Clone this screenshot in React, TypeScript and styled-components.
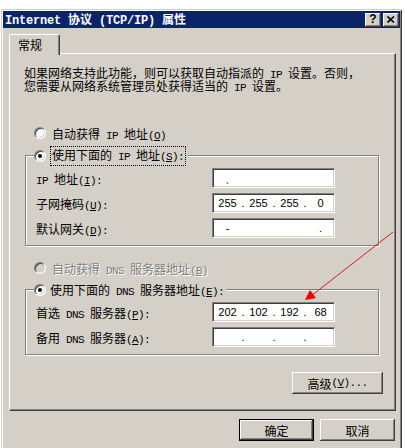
import styled, { createGlobalStyle } from "styled-components";

const face = "#d4d0c8";
const shadow = "#808080";
const dark = "#404040";

const GlobalStyle = createGlobalStyle`
  html, body {
    margin: 0;
    padding: 0;
    background: #fff;
    overflow: hidden;
  }
  body {
    font-family: "Noto Sans CJK SC", "Liberation Sans", sans-serif;
    font-size: 12px;
    color: #000;
  }
`;

const Screen = styled.div`
  position: relative;
  width: 405px;
  height: 448px;
  padding-top: 9px;
  box-sizing: border-box;
  overflow: hidden;
`;

const Window = styled.div`
  margin-left: 1px;
  width: 401px;
  height: 460px;
  box-sizing: border-box;
  padding: 2px;
  background: ${face};
  box-shadow: inset 1px 1px ${face}, inset -1px -1px ${dark},
    inset 2px 2px #fff, inset -2px -2px ${shadow};
`;

const TitleBar = styled.div`
  height: 17px;
  padding: 0 1px 0 2px;
  display: flex;
  align-items: center;
  justify-content: space-between;
  background: #0a246a;
  color: #fff;
  font-weight: bold;
  line-height: 17px;
`;

const TitleButtons = styled.div`
  display: flex;
  gap: 2px;
`;

const TitleButton = styled.div`
  width: 16px;
  height: 14px;
  box-sizing: border-box;
  display: flex;
  align-items: center;
  justify-content: center;
  background: ${face};
  color: #000;
  font-family: "Liberation Sans", sans-serif;
  font-size: 12px;
  font-weight: bold;
  box-shadow: inset -1px -1px ${dark}, inset 1px 1px #fff,
    inset -2px -2px ${shadow}, inset 2px 2px ${face};
`;

const Body = styled.div`
  padding: 6px 5px 0 6px;
`;

const TabRow = styled.div`
  display: flex;
  height: 19px;
`;

const Tab = styled.div`
  position: relative;
  z-index: 1;
  width: 51px;
  height: 21px;
  box-sizing: border-box;
  padding-left: 8px;
  line-height: 19px;
  background: ${face};
  border-left: 1px solid #fff;
  border-top: 1px solid #fff;
  border-right: 1px solid ${dark};
  border-top-right-radius: 2px;
  border-top-left-radius: 2px;
  box-shadow: inset -1px 0 ${shadow};
`;

const Panel = styled.div`
  width: 387px;
  height: 358px;
  box-sizing: border-box;
  padding: 12px 13px 0 14px;
  border: 1px solid;
  border-color: #fff ${dark} ${dark} #fff;
  box-shadow: inset -1px -1px ${shadow};
  display: flex;
  flex-direction: column;
`;

const Intro = styled.div`
  display: flex;
  flex-direction: column;
`;

const IntroLine = styled.div`
  height: 13px;
  line-height: 13px;
  white-space: nowrap;
`;

const RadioRow = styled.div<{ $top: number; $disabled?: boolean }>`
  margin-top: ${(p) => p.$top}px;
  padding-left: 10px;
  height: 16px;
  display: flex;
  align-items: center;
  gap: 6px;
  color: ${(p) => (p.$disabled ? shadow : "#000")};
  text-shadow: ${(p) => (p.$disabled ? "1px 1px 0 #fff" : "none")};
`;

const RadioCircle = styled.span<{ $checked?: boolean; $disabled?: boolean }>`
  flex: none;
  width: 12px;
  height: 12px;
  box-sizing: border-box;
  border-radius: 50%;
  border: 1px solid;
  border-color: ${shadow} #fff #fff ${shadow};
  background: ${(p) => (p.$disabled ? face : "#fff")};
  box-shadow: inset 1px 1px ${dark}, inset -1px -1px ${face};
  display: flex;
  align-items: center;
  justify-content: center;
  &::after {
    content: "";
    display: ${(p) => (p.$checked ? "block" : "none")};
    width: 4px;
    height: 4px;
    border-radius: 50%;
    background: #000;
  }
`;

const Group = styled.fieldset<{ $top: number }>`
  margin: ${(p) => p.$top}px 3px 0 1px;
  padding: 4px 8px 7px 8px;
  min-width: 0;
  border: 1px solid ${shadow};
  box-shadow: inset 1px 1px 0 #fff, 1px 1px 0 #fff;
  display: flex;
  flex-direction: column;
  gap: 5px;
`;

const Legend = styled.legend`
  padding: 0 2px 0 0;
  background: ${face};
  display: flex;
  align-items: center;
  gap: 4px;
  height: 17px;
`;

const FocusLabel = styled.span`
  border: 1px dotted #000;
  padding: 0 1px;
  line-height: 15px;
`;

const FieldRow = styled.div`
  display: flex;
  align-items: center;
  height: 20px;
  padding-left: 2px;
`;

const FieldLabel = styled.span`
  width: 176px;
`;

const IpBox = styled.div`
  width: 123px;
  height: 20px;
  box-sizing: border-box;
  padding: 0 1px 0 2px;
  display: flex;
  align-items: center;
  background: #fff;
  border: 1px solid;
  border-color: ${shadow} #fff #fff ${shadow};
  box-shadow: inset 1px 1px ${dark}, inset -1px -1px ${face};
  font-family: "Liberation Sans", sans-serif;
  font-size: 11px;
`;

const Octet = styled.span`
  width: 26px;
  text-align: center;
  &:last-child {
    width: auto;
    flex: 1;
  }
`;

const Dot = styled.span<{ $shown: boolean }>`
  width: 6px;
  text-align: center;
  visibility: ${(p) => (p.$shown ? "visible" : "hidden")};
`;

const ButtonRow = styled.div<{ $top: number }>`
  margin-top: ${(p) => p.$top}px;
  display: flex;
  justify-content: flex-end;
  gap: 6px;
`;

const Button = styled.div<{ $width: number; $default?: boolean }>`
  width: ${(p) => p.$width}px;
  height: 22px;
  box-sizing: border-box;
  display: flex;
  align-items: center;
  justify-content: center;
  background: ${face};
  border: ${(p) => (p.$default ? "1px solid #000" : "none")};
  box-shadow: inset -1px -1px ${dark}, inset 1px 1px #fff,
    inset -2px -2px ${shadow}, inset 2px 2px ${face};
`;

const AdvancedRow = styled(ButtonRow)`
  margin-right: -1px;
`;

const Footer = styled(ButtonRow)``;

const Lat = styled.span<{ $bold?: boolean }>`
  font-family: "Liberation Mono", monospace;
  font-size: ${(p) => (p.$bold ? "12px" : "11px")};
  letter-spacing: ${(p) => (p.$bold ? "-0.2px" : "-0.6px")};
  font-weight: ${(p) => (p.$bold ? "bold" : "normal")};
  white-space: pre;
  u {
    text-underline-offset: 1px;
  }
`;

const Overlay = styled.svg`
  position: absolute;
  left: 0;
  top: 0;
  pointer-events: none;
`;

function Txt({ s, bold }: { s: string; bold?: boolean }) {
  const runs = s.split(/([\x20-\x7e]+)/).filter((r) => r !== "");
  return (
    <>
      {runs.map((run, i) => {
        if (!/^[\x20-\x7e]+$/.test(run)) return <span key={i}>{run}</span>;
        const parts = run.split(/&(.)/);
        return (
          <Lat key={i} $bold={bold}>
            {parts.map((p, j) => (j % 2 === 1 ? <u key={j}>{p}</u> : p))}
          </Lat>
        );
      })}
    </>
  );
}

function IpField({ octets, dots = true }: { octets: string[]; dots?: boolean }) {
  return (
    <IpBox>
      {octets.map((o, i) => (
        <span key={i} style={{ display: "contents" }}>
          {i > 0 && <Dot $shown={dots}>.</Dot>}
          <Octet>{o}</Octet>
        </span>
      ))}
    </IpBox>
  );
}

function Field({ label, children }: { label: string; children: React.ReactNode }) {
  return (
    <FieldRow>
      <FieldLabel>
        <Txt s={label} />
      </FieldLabel>
      {children}
    </FieldRow>
  );
}

export default function App() {
  return (
    <Screen>
      <GlobalStyle />
      <Window>
        <TitleBar>
          <span>
            <Txt s="Internet 协议 (TCP/IP) 属性" bold />
          </span>
          <TitleButtons>
            <TitleButton>?</TitleButton>
            <TitleButton>
              <svg width="8" height="7" viewBox="0 0 8 7">
                <path d="M0.5 0.5 L7 6.5 M7 0.5 L0.5 6.5" stroke="#000" strokeWidth="1.6" />
              </svg>
            </TitleButton>
          </TitleButtons>
        </TitleBar>
        <Body>
          <TabRow>
            <Tab>常规</Tab>
          </TabRow>
          <Panel>
            <Intro>
              <IntroLine>
                <Txt s="如果网络支持此功能，则可以获取自动指派的 IP 设置。否则，" />
              </IntroLine>
              <IntroLine>
                <Txt s="您需要从网络系统管理员处获得适当的 IP 设置。" />
              </IntroLine>
            </Intro>
            <RadioRow $top={33}>
              <RadioCircle />
              <span>
                <Txt s="自动获得 IP 地址(&O)" />
              </span>
            </RadioRow>
            <Group $top={6}>
              <Legend>
                <RadioCircle $checked />
                <FocusLabel>
                  <Txt s="使用下面的 IP 地址(&S):" />
                </FocusLabel>
              </Legend>
              <Field label="IP 地址(&I):">
                <IpField octets={["ˎ", "", "", ""]} dots={false} />
              </Field>
              <Field label="子网掩码(&U):">
                <IpField octets={["255", "255", "255", "0"]} />
              </Field>
              <Field label="默认网关(&D):">
                <IpField octets={["-", "", "", "."]} dots={false} />
              </Field>
            </Group>
            <RadioRow $top={14} $disabled>
              <RadioCircle $disabled />
              <span>
                <Txt s="自动获得 DNS 服务器地址(&B)" />
              </span>
            </RadioRow>
            <Group $top={5}>
              <Legend>
                <RadioCircle $checked />
                <span>
                  <Txt s="使用下面的 DNS 服务器地址(&E):" />
                </span>
              </Legend>
              <Field label="首选 DNS 服务器(&P):">
                <IpField octets={["202", "102", "192", "68"]} />
              </Field>
              <Field label="备用 DNS 服务器(&A):">
                <IpField octets={["", "", "", ""]} />
              </Field>
            </Group>
            <AdvancedRow $top={17}>
              <Button $width={91}>
                <Txt s="高级(&V)..." />
              </Button>
            </AdvancedRow>
          </Panel>
          <Footer $top={8}>
            <Button $width={75} $default>
              确定
            </Button>
            <Button $width={75}>取消</Button>
          </Footer>
        </Body>
      </Window>
      <Overlay width="405" height="448" viewBox="0 0 405 448">
        <line x1="393" y1="232" x2="311" y2="296" stroke="#e0141e" strokeWidth="1" />
        <polygon points="305,300 310,290 316,298" fill="#f00000" />
      </Overlay>
    </Screen>
  );
}
